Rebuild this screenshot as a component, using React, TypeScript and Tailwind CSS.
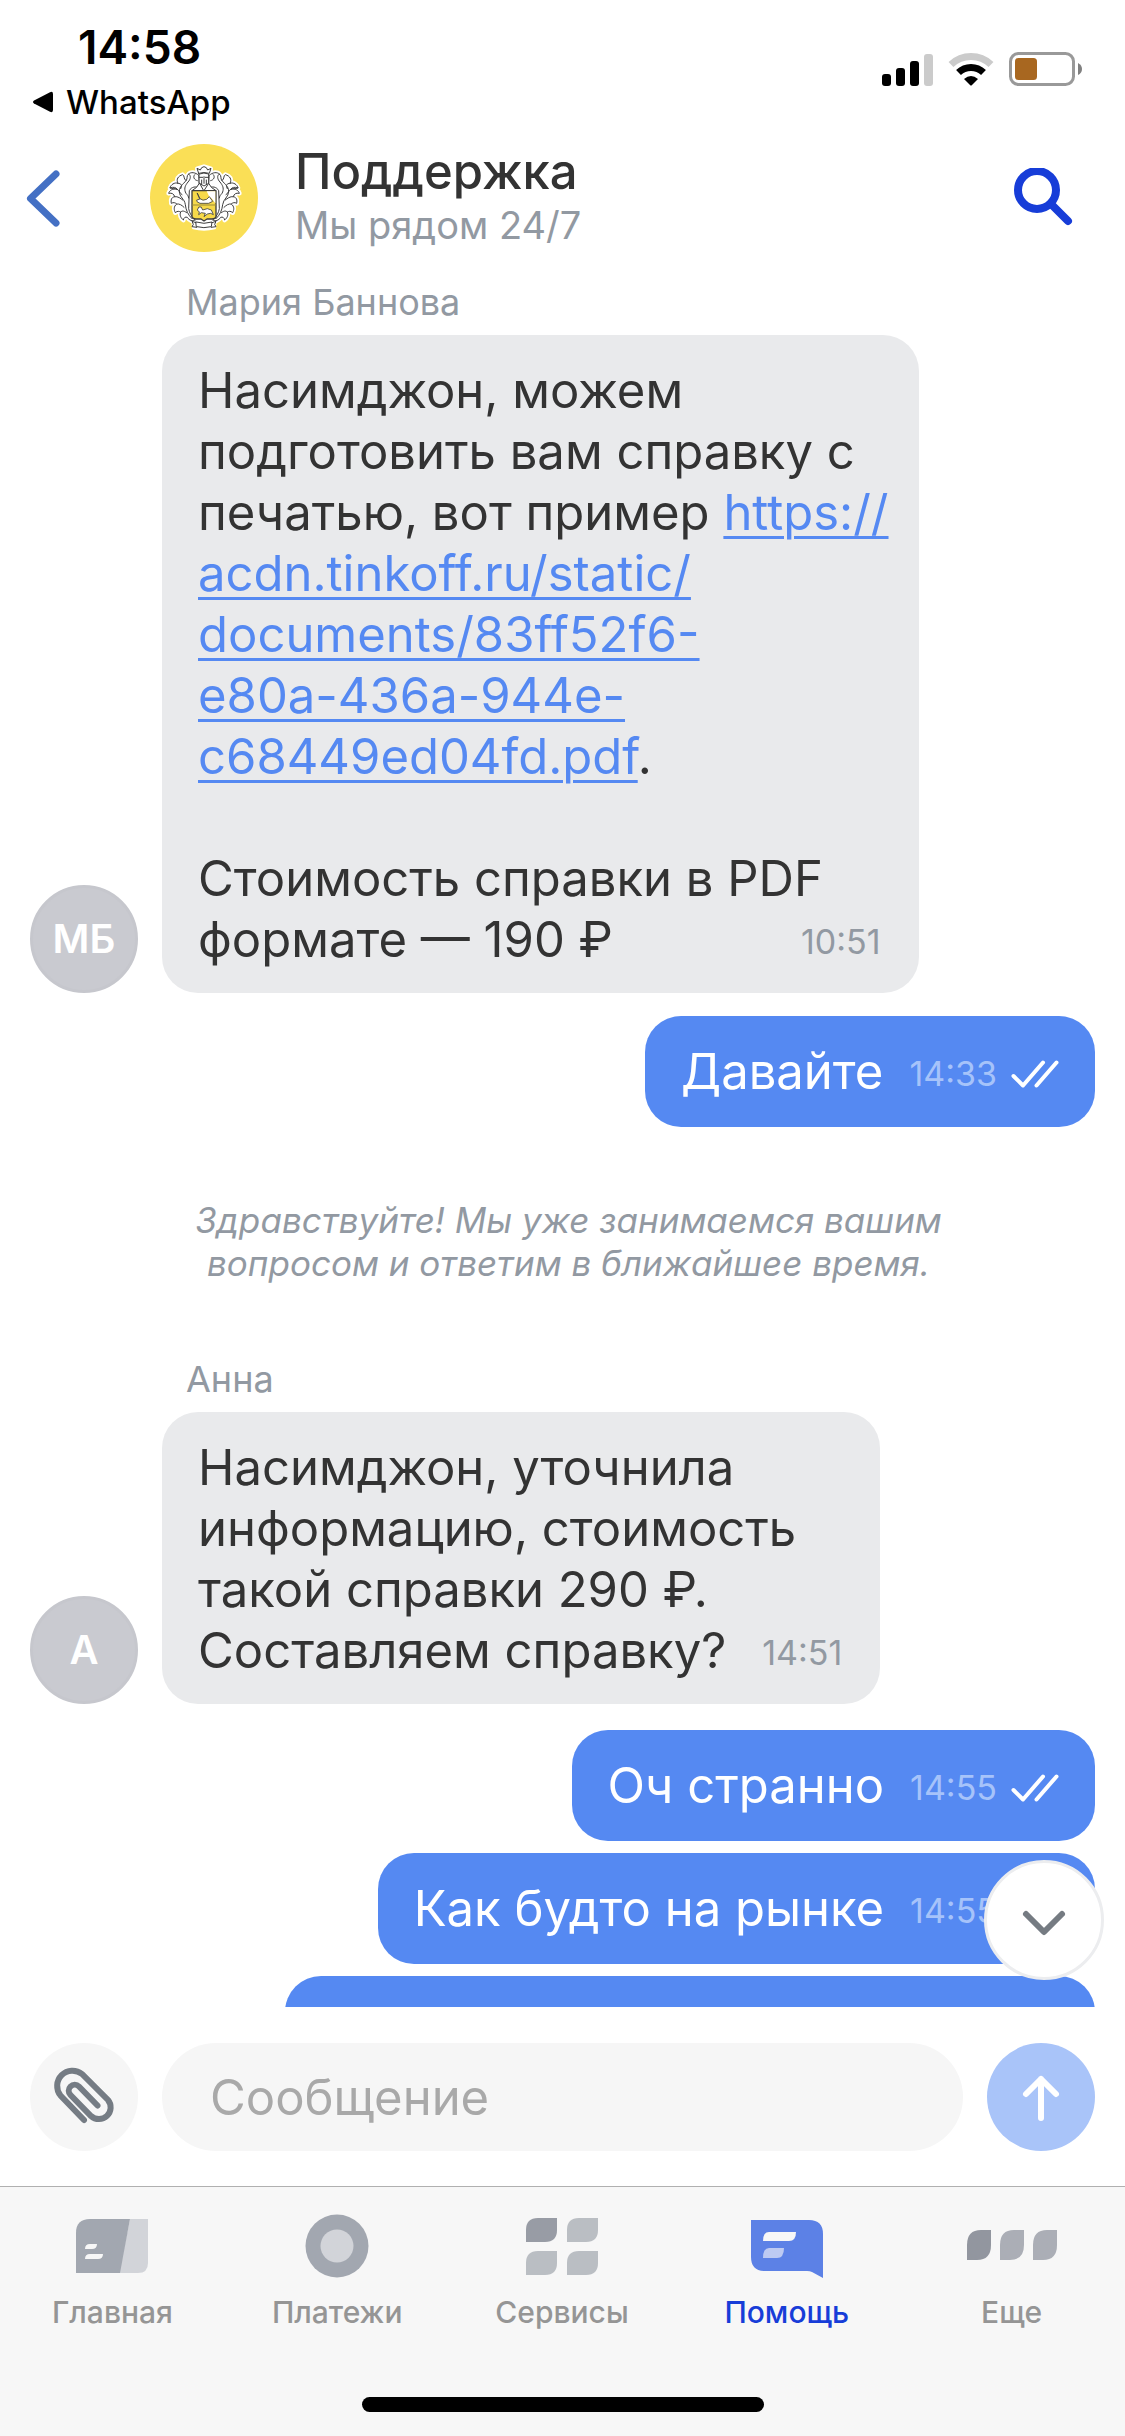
import { useState, type ReactNode } from 'react'

type Tab = 'home' | 'payments' | 'services' | 'help' | 'more'

const PDF_URL = 'https://acdn.tinkoff.ru/static/documents/83ff52f6-e80a-436a-944e-c68449ed04fd.pdf'

function StatusBar() {
  return (
    <div className="flex items-start justify-between pt-5 pr-[43px] pl-8 text-black">
      <div>
        <div className="pl-[46px] text-[46px] leading-[54px] font-semibold">14:58</div>
        <button type="button" className="flex items-center gap-3 text-[33px] leading-[56px] font-medium">
          <svg width="22" height="22" viewBox="0 0 22 22" aria-hidden="true">
            <path d="M2 9.5 18 1.2Q21 0 21 3V19Q21 22 18 20.8L2 12.5Q0 11 2 9.5Z" />
          </svg>
          WhatsApp
        </button>
      </div>

      <div className="flex items-end gap-[15px] pt-8">
        <svg width="51" height="33" viewBox="0 0 51 33" aria-hidden="true">
          <rect x="0" y="21" width="9" height="12" rx="3" />
          <rect x="14" y="15" width="9" height="18" rx="3" />
          <rect x="28" y="8" width="9" height="25" rx="3" />
          <rect x="42" y="1" width="9" height="32" rx="3" fill="#cbcbcb" />
        </svg>
        <svg width="46" height="34" viewBox="0 0 46 34" fill="none" aria-hidden="true">
          <path d="M3 12.5A29 29 0 0 1 43 12.5" stroke="#cbcbcb" strokeWidth="7" />
          <path d="M10.5 20.5A18 18 0 0 1 35.5 20.5" stroke="#000" strokeWidth="7" />
          <path d="M16 27Q23 21 30 27L24 33Q23 34 22 33Z" fill="#000" />
        </svg>
        <svg width="73" height="34" viewBox="0 0 73 34" fill="none" aria-hidden="true">
          <rect x="1.5" y="1.5" width="63" height="31" rx="8" stroke="#999" strokeWidth="3" />
          <rect x="6" y="6" width="22" height="22" rx="3.5" fill="#a86720" />
          <path d="M69 11Q73 13 73 17T69 23Z" fill="#808080" />
        </svg>
      </div>
    </div>
  )
}

// One side of the mantling around the shield, mirrored for the other side
function CrestLeaves() {
  return (
    <>
      <path d="M146 94C136 84 122 84 116 90C108 96 114 104 108 110C100 104 104 94 98 92C84 96 78 106 84 118C74 114 62 122 60 132C70 128 78 130 82 136C68 132 58 140 56 148C66 146 72 150 74 158C64 160 62 168 64 178C70 174 76 176 80 180C70 188 72 198 76 206C82 200 88 202 92 204C88 212 92 222 100 228C102 220 106 218 112 220C118 230 128 232 136 228C124 218 118 206 116 194L118 140C124 128 138 126 148 132Z" />
      <path d="M108 110C98 122 88 128 88 142C88 160 104 164 106 182C108 200 114 212 126 224" fill="none" />
      <path d="M84 118C94 118 98 124 92 134M82 136C90 140 88 148 96 152M74 158C84 156 92 164 98 168M80 180C88 178 96 184 102 190M92 204C98 198 104 202 110 206M116 90C124 94 122 106 114 114C106 124 102 132 106 144C110 154 114 150 116 162M134 92C128 98 132 108 142 110M60 132C66 136 76 132 82 136" fill="none" />
    </>
  )
}

function Crest() {
  return (
    <svg className="size-[108px] shrink-0 rounded-full bg-[#fadf56]" viewBox="0 0 324 324" role="img" aria-label="Тинькофф">
      <g stroke="#fff" strokeWidth="14" strokeLinejoin="round" fill="#fff">
        <CrestLeaves />
        <g transform="translate(324 0) scale(-1 1)">
          <CrestLeaves />
        </g>
        <path d="M142 74 162 68 182 74 178 130H146ZM126 138H198V224L162 232L126 224Z" />
        <path d="M128 234Q162 244 196 234L194 252Q162 260 130 252Z" strokeWidth="8" />
      </g>
      <g stroke="#3d3d3d" strokeWidth="3" strokeLinejoin="round" strokeLinecap="round" fill="#fff">
        <CrestLeaves />
        <g transform="translate(324 0) scale(-1 1)">
          <CrestLeaves />
        </g>
        <path d="M146 88 141 73 151 78 155 71 162 68 169 71 173 78 183 73 178 88Q162 83 146 88Z" />
        <path d="M148 90Q162 84 176 90V118L162 126L148 118ZM148 100H158M166 100H176M162 98V118M155 108V120M169 108V120" />
        <path d="M148 118Q142 132 126 140H198Q182 132 176 118L162 140Z" />
        <path d="M126 140H198V218Q197 225 186 225H171L162 231L153 225H138Q127 225 126 218Z" fill="#f6d94a" strokeWidth="4" />
        <path d="M170 142H196V178L186 164 178 158Z" stroke="none" />
        <path d="M142 148 150 164Q158 172 170 166L178 158L188 172L176 178H150Q138 174 140 168L148 166Z" strokeWidth="2.5" />
        <path d="M126 183H198" stroke="#9a8a3a" />
        <path d="M146 190 142 198 148 204 146 212 154 206 166 208 162 218 172 210 182 208 190 212 184 198 172 194 158 198 154 190Z" strokeWidth="2.5" />
        <path d="M138 234Q162 242 186 234L184 248Q162 254 140 248ZM138 236 126 232 130 241 126 248 140 250M186 236 198 232 194 241 198 248 184 250" />
      </g>
    </svg>
  )
}

function Header() {
  return (
    <header className="flex items-center pt-[14px] pr-[51px] pl-[26px]">
      <button type="button" aria-label="Назад" className="mr-[90px]">
        <svg width="34" height="57" viewBox="0 0 34 57" fill="none" stroke="#4470c4" strokeWidth="7" strokeLinecap="round" strokeLinejoin="round">
          <path d="M30 4 4.5 28.5 30 53" />
        </svg>
      </button>
      <Crest />
      <div className="ml-[37px] flex-1 pb-[2px]">
        <h1 className="text-[49px] leading-[56px] font-medium text-[#333]">Поддержка</h1>
        <p className="text-[38px] leading-[50px] text-[#9299a2]">Мы рядом 24/7</p>
      </div>
      <button type="button" aria-label="Поиск">
        <svg width="60" height="60" viewBox="0 0 60 60" fill="none" stroke="#173dd8" strokeWidth="8" strokeLinecap="round">
          <circle cx="23" cy="22" r="19" />
          <path d="m37 36 17 17" />
        </svg>
      </button>
    </header>
  )
}

interface IncomingProps {
  author: string
  initials: string
  time: string
  children: ReactNode
}

function Incoming({ author, initials, time, children }: IncomingProps) {
  return (
    <article>
      <div className="mb-[11px] pl-[186px] text-[36px] leading-[44px] text-[#9299a2]">{author}</div>
      <div className="flex items-end gap-6 pl-[30px]">
        <div className="flex size-[108px] shrink-0 items-center justify-center rounded-full border-3 border-[#c6c7cd] bg-[#c9cad0] text-[40px] font-semibold text-white">
          {initials}
        </div>
        <div className="max-w-[760px] rounded-[36px] bg-[#e9eaec] pt-[25px] pr-[30px] pb-[23px] pl-9 text-[49px] leading-[61px] whitespace-pre-line text-[#333]">
          {children}
          <time className="float-right mr-2 ml-9 h-[61px] text-[34px] leading-[66px] text-[#9299a2]">{time}</time>
        </div>
      </div>
    </article>
  )
}

function Outgoing({ text, time }: { text: string; time: string }) {
  return (
    <article className="mr-[30px] ml-auto flex w-fit rounded-[36px] bg-[#5589f2] px-9 py-[25px] text-[49px] leading-[61px] text-white">
      {text}
      <div className="ml-[26px] flex h-[61px] items-center gap-[14px]">
        <time className="h-[61px] text-[34px] leading-[66px] text-[#a6c3fa]">{time}</time>
        <svg className="mt-1" width="48" height="28" viewBox="0 0 48 28" fill="none" stroke="#fff" strokeWidth="4" strokeLinecap="round" strokeLinejoin="round" role="img" aria-label="Прочитано">
          <path d="M2.5 16 12 25.5 32 2.5M25.5 25.5 45.5 2.5" />
        </svg>
      </div>
    </article>
  )
}

function Composer() {
  const [message, setMessage] = useState('')

  return (
    <form className="flex items-center gap-6 bg-white px-[30px] pt-9 pb-[35px]" onSubmit={(e) => e.preventDefault()}>
      <button type="button" aria-label="Прикрепить файл" className="size-[108px] shrink-0 rounded-full bg-[#f6f6f6]">
        <svg viewBox="0 0 108 108" fill="none" stroke="#757c84" strokeWidth="6" strokeLinecap="round">
          <path d="M54 77 30.5 52.5A15.3 15.3 0 0 1 52 31L78 57A11.7 11.7 0 0 1 61 73L40.5 52A6 6 0 0 1 49 43.5L67.5 62.5" />
        </svg>
      </button>
      <input
        type="text"
        aria-label="Сообщение"
        placeholder="Сообщение"
        value={message}
        onChange={(e) => setMessage(e.target.value)}
        className="h-[108px] min-w-0 flex-1 rounded-full bg-[#f6f6f6] px-12 text-[49px] text-[#333] placeholder:text-[#a9a9a9]"
      />
      <button type="submit" aria-label="Отправить" className="size-[108px] shrink-0 rounded-full bg-[#a9c4f9]">
        <svg viewBox="0 0 108 108" fill="none" stroke="#fff" strokeWidth="6" strokeLinecap="round" strokeLinejoin="round">
          <path d="M54 75V36M39 51 54 36 69 51" />
        </svg>
      </button>
    </form>
  )
}

const tabs: { id: Tab; label: string; icon: ReactNode }[] = [
  {
    id: 'home',
    label: 'Главная',
    icon: (
      <svg width="72" height="64" viewBox="0 0 72 64">
        <path d="M54 5H72V49Q72 59 62 59H43Z" fill="#d2d4d9" />
        <path d="M14 5H54L44 59H0V19Q0 5 14 5Z" fill="#a2a7b0" />
        <path d="M14 30H21Q21 35 16 35H9Q9 30 14 30ZM14 40H27Q27 45 22 45H9Q9 40 14 40Z" fill="#f7f7f7" />
      </svg>
    ),
  },
  {
    id: 'payments',
    label: 'Платежи',
    icon: (
      <svg width="64" height="64" viewBox="0 0 64 64">
        <circle cx="32" cy="32" r="31.5" fill="#a2a7b0" />
        <circle cx="32" cy="32" r="16.5" fill="#d2d4d9" />
      </svg>
    ),
  },
  {
    id: 'services',
    label: 'Сервисы',
    icon: (
      <svg width="72" height="64" viewBox="0 0 72 64" fill="#babec3">
        <path d="M12 4H31V16Q31 28 19 28H0V16Q0 4 12 4Z" fill="#989ca5" />
        <path d="M53 4H72V16Q72 28 60 28H41V16Q41 4 53 4Z" />
        <path d="M12 37H31V49Q31 61 19 61H0V49Q0 37 12 37Z" />
        <path d="M53 37H72V49Q72 61 60 61H41V49Q41 37 53 37Z" />
      </svg>
    ),
  },
  {
    id: 'help',
    label: 'Помощь',
    icon: (
      <svg width="72" height="64" viewBox="0 0 72 64">
        <path d="M0 6H58Q72 6 72 20V64L61 58Q59 57 56 57H14Q0 57 0 43Z" fill="#5c81e6" />
        <path d="M18 18H45Q45 27 38 27H12Q12 18 18 18Z" fill="#f7f7f7" />
        <path d="M18 34H33Q33 44 26 44H12Q12 34 18 34Z" fill="#bdcaf2" />
      </svg>
    ),
  },
  {
    id: 'more',
    label: 'Еще',
    icon: (
      <svg width="90" height="64" viewBox="0 0 90 64" fill="#abaeb6">
        <path d="M14 16H24V31Q24 46 10 46H0V31Q0 16 14 16Z" fill="#92969f" />
        <path d="M47 16H57V31Q57 46 43 46H33V31Q33 16 47 16Z" />
        <path d="M80 16H90V31Q90 46 76 46H66V31Q66 16 80 16Z" />
      </svg>
    ),
  },
]

function TabBar() {
  const [active, setActive] = useState<Tab>('help')

  return (
    <footer className="border-t border-[#b0b0b0] bg-[#f7f7f7]">
      <nav className="grid grid-cols-5 pt-[27px] pr-px">
        {tabs.map((tab) => (
          <button
            key={tab.id}
            type="button"
            onClick={() => setActive(tab.id)}
            className={`flex flex-col items-center gap-4 text-[30px] leading-[36px] font-medium ${
              active === tab.id ? 'text-[#173dd8]' : 'text-[#959595]'
            }`}
          >
            {tab.icon}
            {tab.label}
          </button>
        ))}
      </nav>
      <div className="mx-auto mt-[67px] mb-6 h-[15px] w-[402px] rounded-full bg-black" />
    </footer>
  )
}

export default function App() {
  return (
    <div className="flex h-screen flex-col bg-white font-['Inter','Liberation_Sans',sans-serif]">
      <StatusBar />
      <Header />

      <main className="relative min-h-0 flex-1 overflow-hidden pt-7">
        <Incoming author="Мария Баннова" initials="МБ" time="10:51">
          Насимджон, можем{'\n'}подготовить вам справку с{'\n'}печатью, вот пример{' '}
          <a href={PDF_URL} className="text-[#5589f2] underline decoration-3 underline-offset-[6px]">
            {'https://\nacdn.tinkoff.ru/static/\ndocuments/83ff52f6-\ne80a-436a-944e-\nc68449ed04fd.pdf'}
          </a>
          .{'\n\n'}Стоимость справки в PDF{'\n'}формате — 190 ₽
        </Incoming>

        <div className="mt-[23px]">
          <Outgoing text="Давайте" time="14:33" />
        </div>

        <p className="mx-auto my-[72px] pl-3 text-center text-[35px] leading-[43px] text-[#9299a2] italic">
          Здравствуйте! Мы уже занимаемся вашим
          <br />
          вопросом и ответим в ближайшее время.
        </p>

        <Incoming author="Анна" initials="А" time="14:51">
          {'Насимджон, уточнила\nинформацию, стоимость\nтакой справки 290 ₽.\nСоставляем справку?'}
        </Incoming>

        <div className="mt-[26px] flex flex-col gap-3">
          <Outgoing text="Оч странно" time="14:55" />
          <Outgoing text="Как будто на рынке" time="14:55" />
          <div className="mr-[30px] ml-auto h-[111px] w-[72%] rounded-[36px] bg-[#5589f2]" />
        </div>

        {/* Floats over the message list */}
        <button
          type="button"
          aria-label="Вниз"
          className="absolute right-[21px] bottom-[27px] size-[120px] rounded-full border-3 border-[#ecedef] bg-white"
        >
          <svg viewBox="0 0 114 114" fill="none" stroke="#757b82" strokeWidth="6" strokeLinecap="round" strokeLinejoin="round">
            <path d="M39 51 57 69 75 51" />
          </svg>
        </button>
      </main>

      <Composer />
      <TabBar />
    </div>
  )
}
